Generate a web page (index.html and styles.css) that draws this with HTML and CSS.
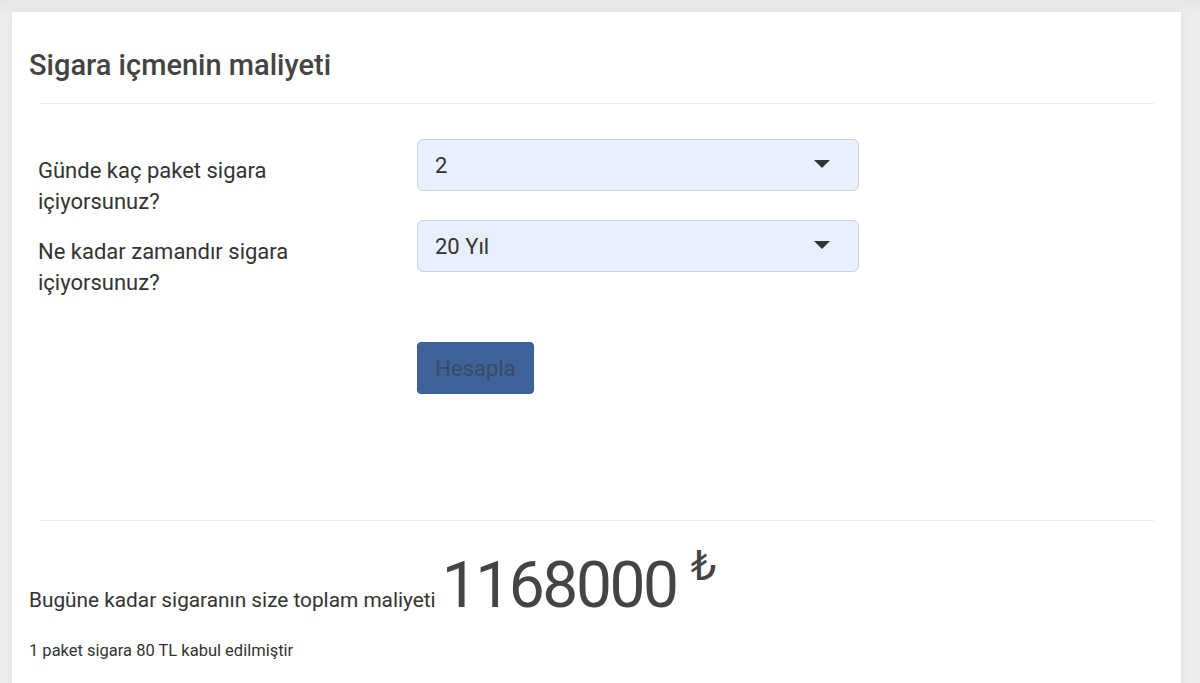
FILE: index.html
```html
<!DOCTYPE html>
<html lang="tr">
<head>
<meta charset="utf-8">
<title>Sigara içmenin maliyeti</title>
<link rel="stylesheet" href="styles.css">
</head>
<body>
<div class="card">
  <div class="card-header">
    <h1 class="title">Sigara içmenin maliyeti</h1>
  </div>
  <div class="divider"></div>
  <form class="calc-form">
    <div class="form-row">
      <label class="form-label">Günde kaç paket sigara içiyorsunuz?</label>
      <div class="select">
        <span class="select-value">2</span>
        <svg class="caret" width="16" height="8" viewBox="0 0 16 8"><path d="M0 0h16L8 8z" fill="#333"/></svg>
      </div>
    </div>
    <div class="form-row">
      <label class="form-label">Ne kadar zamandır sigara içiyorsunuz?</label>
      <div class="select">
        <span class="select-value">20 Yıl</span>
        <svg class="caret" width="16" height="8" viewBox="0 0 16 8"><path d="M0 0h16L8 8z" fill="#333"/></svg>
      </div>
    </div>
    <div class="form-actions">
      <button type="button" class="btn">Hesapla</button>
    </div>
  </form>
  <div class="divider divider-bottom"></div>
  <div class="result">
    <p class="result-line">
      <span class="result-label">Bugüne kadar sigaranın size toplam maliyeti</span>
      <span class="result-value">1168000</span>
      <span class="result-currency">₺</span>
    </p>
    <p class="note">1 paket sigara 80 TL kabul edilmiştir</p>
  </div>
</div>
</body>
</html>
```
FILE: styles.css
```css
html, body {
  margin: 0;
  padding: 0;
}
body {
  background: linear-gradient(180deg, #e6e6e6 0px, #ececec 14px, #ececec 100%);
  font-family: Roboto, "Open Sans", Arial, sans-serif;
  color: #444;
  height: 683px;
  overflow: hidden;
}
.card {
  margin: 12px 19px 0 12px;
  background: #fff;
  min-height: 680px;
  box-shadow: 0 0 8px rgba(0, 0, 0, 0.06);
}
.card-header {
  padding: 33px 17px 0 17px;
  height: 59px;
  box-sizing: border-box;
}
.title {
  margin: 0;
  font-family: Roboto, sans-serif;
  font-weight: 500;
  font-size: 29px;
  line-height: 40px;
  color: #444;
}
.divider {
  height: 1px;
  background: #ececec;
  margin: 32px 27px 0 28px;
}
.calc-form {
  padding: 35px 0 0 26px;
}
.form-row {
  display: flex;
  align-items: flex-start;
  height: 78px;
  margin-bottom: 3px;
}
.form-label {
  width: 379px;
  box-sizing: border-box;
  padding: 16px 90px 0 0;
  font-family: Roboto, sans-serif;
  font-size: 22px;
  line-height: 31px;
  color: #333;
}
.select {
  width: 442px;
  height: 52px;
  box-sizing: border-box;
  background: #e8f0fe;
  border: 1px solid #c9d1dc;
  border-radius: 6px;
  display: flex;
  align-items: center;
  justify-content: space-between;
  padding: 0 28px 0 17px;
}
.select-value {
  font-family: Roboto, sans-serif;
  font-size: 22px;
  color: #333;
}
.caret {
  display: block;
  margin-top: -3px;
}
.form-actions {
  padding: 41px 0 0 379px;
}
.btn {
  width: 117px;
  height: 52px;
  background: #3e6399;
  border: 1px solid #3a5d92;
  border-radius: 4px;
  font-family: Roboto, sans-serif;
  font-size: 22px;
  color: #3a4a61;
  padding: 0;
}
.divider-bottom {
  margin-top: 126px;
}
.result {
  padding: 0 17px;
}
.result-line {
  margin: 30px 0 0 0;
  display: flex;
  align-items: baseline;
  height: 70px;
}
.result-label {
  font-family: Roboto, sans-serif;
  font-size: 20.8px;
  color: #333;
}
.result-value {
  margin-left: 6px;
  font-family: Roboto, sans-serif;
  font-size: 64px;
  letter-spacing: -2.4px;
  color: #444;
  line-height: 70px;
}
.result-currency {
  margin-left: 14px;
  font-family: "DejaVu Sans", sans-serif;
  font-size: 40px;
  position: relative;
  top: -27px;
  color: #444;
}
.note {
  margin: 20px 0 0 0;
  font-family: Roboto, sans-serif;
  font-size: 16.5px;
  color: #333;
}
```
